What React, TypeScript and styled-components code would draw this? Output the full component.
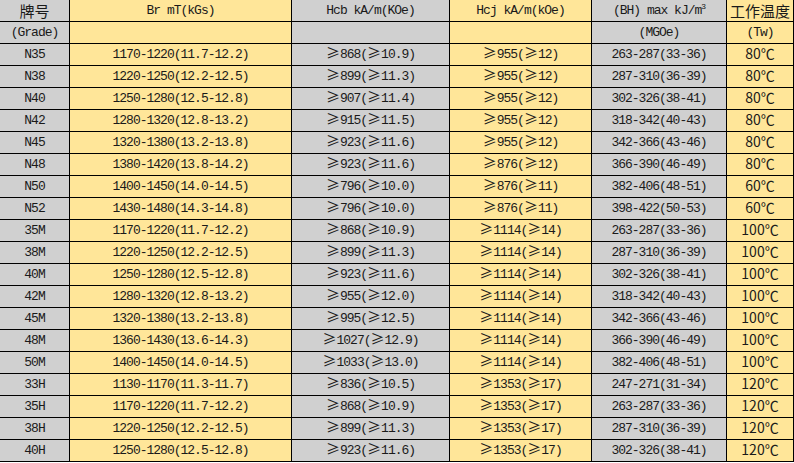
import React from "react";
import styled, { createGlobalStyle } from "styled-components";

const GlobalStyle = createGlobalStyle`
  html, body {
    margin: 0;
    padding: 0;
    background: #ffffff;
  }
`;

type Tone = "grey" | "gold";

const tones: Record<Tone, string> = {
  grey: "#d0d0d0",
  gold: "#ffe699",
};

const columnTones: Tone[] = ["grey", "gold", "grey", "gold", "grey", "gold"];

const rows: string[][] = [
  ["N35", "1170-1220(11.7-12.2)", "≥868(≥10.9)", "≥955(≥12)", "263-287(33-36)", "80℃"],
  ["N38", "1220-1250(12.2-12.5)", "≥899(≥11.3)", "≥955(≥12)", "287-310(36-39)", "80℃"],
  ["N40", "1250-1280(12.5-12.8)", "≥907(≥11.4)", "≥955(≥12)", "302-326(38-41)", "80℃"],
  ["N42", "1280-1320(12.8-13.2)", "≥915(≥11.5)", "≥955(≥12)", "318-342(40-43)", "80℃"],
  ["N45", "1320-1380(13.2-13.8)", "≥923(≥11.6)", "≥955(≥12)", "342-366(43-46)", "80℃"],
  ["N48", "1380-1420(13.8-14.2)", "≥923(≥11.6)", "≥876(≥12)", "366-390(46-49)", "80℃"],
  ["N50", "1400-1450(14.0-14.5)", "≥796(≥10.0)", "≥876(≥11)", "382-406(48-51)", "60℃"],
  ["N52", "1430-1480(14.3-14.8)", "≥796(≥10.0)", "≥876(≥11)", "398-422(50-53)", "60℃"],
  ["35M", "1170-1220(11.7-12.2)", "≥868(≥10.9)", "≥1114(≥14)", "263-287(33-36)", "100℃"],
  ["38M", "1220-1250(12.2-12.5)", "≥899(≥11.3)", "≥1114(≥14)", "287-310(36-39)", "100℃"],
  ["40M", "1250-1280(12.5-12.8)", "≥923(≥11.6)", "≥1114(≥14)", "302-326(38-41)", "100℃"],
  ["42M", "1280-1320(12.8-13.2)", "≥955(≥12.0)", "≥1114(≥14)", "318-342(40-43)", "100℃"],
  ["45M", "1320-1380(13.2-13.8)", "≥995(≥12.5)", "≥1114(≥14)", "342-366(43-46)", "100℃"],
  ["48M", "1360-1430(13.6-14.3)", "≥1027(≥12.9)", "≥1114(≥14)", "366-390(46-49)", "100℃"],
  ["50M", "1400-1450(14.0-14.5)", "≥1033(≥13.0)", "≥1114(≥14)", "382-406(48-51)", "100℃"],
  ["33H", "1130-1170(11.3-11.7)", "≥836(≥10.5)", "≥1353(≥17)", "247-271(31-34)", "120℃"],
  ["35H", "1170-1220(11.7-12.2)", "≥868(≥10.9)", "≥1353(≥17)", "263-287(33-36)", "120℃"],
  ["38H", "1220-1250(12.2-12.5)", "≥899(≥11.3)", "≥1353(≥17)", "287-310(36-39)", "120℃"],
  ["40H", "1250-1280(12.5-12.8)", "≥923(≥11.6)", "≥1353(≥17)", "302-326(38-41)", "120℃"],
];

// full-width glyphs (≥, ℃) come from the CJK font, like SimSun in the original sheet
const renderText = (text: string) =>
  text.split(/([≥℃])/).map((part, i) =>
    part === "≥" || part === "℃" ? <Wide key={i}>{part}</Wide> : part
  );

const App = () => {
  return (
    <>
      <GlobalStyle />
      <Sheet>
        <Cell $tone="grey" $cjk $big>牌号</Cell>
        <Cell $tone="gold">Br mT(kGs)</Cell>
        <Cell $tone="grey">Hcb kA/m(KOe)</Cell>
        <Cell $tone="gold">Hcj kA/m(kOe)</Cell>
        <Cell $tone="grey">
          (BH) max kJ/m<Sup>3</Sup>
        </Cell>
        <Cell $tone="gold" $cjk $big>工作温度</Cell>

        <Cell $tone="grey">(Grade)</Cell>
        <Cell $tone="gold" />
        <Cell $tone="grey" />
        <Cell $tone="gold" />
        <Cell $tone="grey">(MGOe)</Cell>
        <Cell $tone="gold">(Tw)</Cell>

        {rows.map((row) =>
          row.map((value, c) => (
            <Cell key={row[0] + c} $tone={columnTones[c]} $cjk={c === 5}>
              {renderText(value)}
            </Cell>
          ))
        )}
      </Sheet>
    </>
  );
};

const Sheet = styled.div`
  display: grid;
  grid-template-columns: 70px 222px 158px 142px 135px 67px;
  grid-auto-rows: 22px;
  width: 794px;
`;

const Cell = styled.div<{ $tone: Tone; $cjk?: boolean; $big?: boolean }>`
  box-sizing: border-box;
  background-color: ${(props) => tones[props.$tone]};
  border-right: 1px solid #000;
  border-bottom: 1px solid #000;
  color: #1a1a1a;
  text-align: center;
  white-space: nowrap;
  padding-top: ${(props) => (props.$big ? "1px" : "0")};
  line-height: ${(props) => (props.$big ? "20px" : props.$cjk ? "19px" : "21px")};
  font-family: ${(props) =>
    props.$cjk
      ? '"Noto Sans CJK SC", "Noto Sans", sans-serif'
      : '"Liberation Mono", "Noto Sans CJK SC", monospace'};
  font-size: ${(props) => (props.$big ? "15px" : props.$cjk ? "14px" : "13px")};
  letter-spacing: ${(props) => (props.$cjk ? "0" : "-1px")};
`;

const Wide = styled.span`
  font-family: "Noto Sans CJK SC", sans-serif;
  font-size: 14px;
  line-height: 0;
  letter-spacing: 0;
`;

const Sup = styled.sup`
  font-size: 8px;
  line-height: 0;
  vertical-align: 5px;
`;

export default App;
